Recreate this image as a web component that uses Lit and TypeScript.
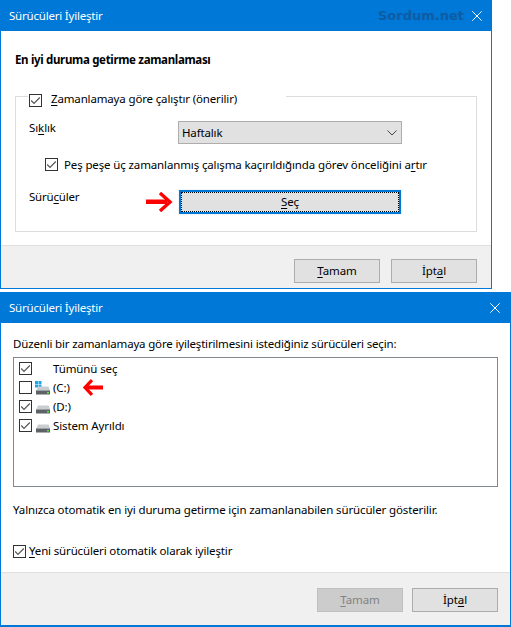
import { LitElement, html, css, svg } from "lit";
import { customElement } from "lit/decorators.js";

const check = svg`<svg class="cb" viewBox="0 0 13 13" width="13" height="13"><rect x=".5" y=".5" width="12" height="12" fill="#fff" stroke="#333"/><path d="M2.2 6.500 5 9.300 10.800 3.500" fill="none" stroke="#555" stroke-width="1.2"/></svg>`;
const uncheck = svg`<svg class="cb" viewBox="0 0 13 13" width="13" height="13"><rect x=".5" y=".5" width="12" height="12" fill="#fff" stroke="#333"/></svg>`;
const close = svg`<svg class="x" viewBox="0 0 10 10" width="10" height="10"><path d="M.3.3 9.700 9.700M9.700.3.3 9.700" stroke="#fff" stroke-width="1" fill="none"/></svg>`;
const arrowR = svg`<svg class="arrow" viewBox="0 0 27 20" width="27" height="20"><path d="M0 7.500h21v4.500H0z" fill="#f00"/><path d="M14 1 24 10 14 19" fill="none" stroke="#f00" stroke-width="3.400"/></svg>`;
const arrowL = svg`<svg class="arrow" viewBox="0 0 21 17" width="21" height="17"><path d="M4 6.500h17v4H4z" fill="#f00"/><path d="M10 1.200 3 8.500 10 15.800" fill="none" stroke="#f00" stroke-width="3.200"/></svg>`;
const drive = (win: boolean) => svg`<svg class="drive" viewBox="0 0 16 16" width="16" height="16">
  ${win ? svg`<path d="M1 0h3v3H1zM4.500 0h3v3h-3zM1 3.500h3v3H1zM4.500 3.500h3v3h-3z" fill="#1ea7e8"/>` : ""}
  <path d="M2.500 9 4 5.500h10.500L16 9z" fill="#c9cdd0"/>
  <rect x="2" y="9" width="14" height="4.500" fill="#5c6266"/>
  <rect x="2" y="9" width="14" height="1" fill="#9aa0a4"/>
  <rect x="13" y="11" width="2" height="1.500" fill="#5fe04a"/>
</svg>`;

@customElement("app-root")
export class AppRoot extends LitElement {
  static styles = css`
    :host { display: block; width: 511px; height: 627px; overflow: hidden; background: #fff;
      font: 11.5px/16px "Noto Sans", sans-serif; color: #000; letter-spacing: -.12px; }
    .page { display: flex; flex-direction: column; gap: 3px; align-items: flex-start; }
    .win { box-sizing: border-box; border: 1px solid #0078d7; border-top: 0; display: flex; flex-direction: column; background: #fff; }
    .w1 { width: 492px; height: 289px; }
    .w2 { width: 511px; height: 335px; border-width: 0 1px 2px 1px; }
    .title { height: 31px; flex: none; background: #0078d7; color: #fff; display: flex; align-items: center; padding: 0 10px 0 9px; margin: 0 -1px; letter-spacing: -.2px; }
    .w2 .title { padding-right: 11px; }
    .title .t { flex: 1; }
    .title .wm { font: bold 13px "DejaVu Sans", sans-serif; color: #0f5ca3; letter-spacing: 0; margin-right: 8px; }
    .x { display: block; }
    .body { flex: 1; min-height: 0; }
    .w1 .body { padding: 21px 15px 0 14px; }
    h2 { margin: 0; font: bold 11.5px/16px "Noto Sans", sans-serif; letter-spacing: -.33px; }
    fieldset { margin: 17px 0 0; padding: 14px 13px 0; height: 147px; box-sizing: border-box; border: 1px solid #dcdcdc; min-width: 0; width: 462px; }
    legend { margin-left: -1px; width: 258px; display: flex; align-items: flex-end; gap: 9px; height: 22px; padding: 0 0 0 1px; box-sizing: border-box; letter-spacing: -.15px; }
    .cb { display: block; flex: none; }
    .grid { display: grid; grid-template-columns: 149px 224px; }
    .lab { letter-spacing: -.1px; margin-top: -1px; }
    .select { box-sizing: border-box; height: 23px; background: #e1e1e1; border: 1px solid #adadad; display: flex; align-items: center; justify-content: space-between; padding: 0 4px 0 3px; letter-spacing: -.15px; }
    .opt { grid-column: 1 / 3; display: flex; align-items: center; gap: 6px; padding-left: 16px; margin: 14px 0 19px; letter-spacing: -.13px; white-space: nowrap; height: 13px; }
    .btn { box-sizing: border-box; width: 86px; height: 24px; background: #e1e1e1; border: 1px solid #adadad; display: flex; align-items: center; justify-content: center; }
    .focus { width: 222px; height: 24px; margin-left: 1px; border: 2px solid #0078d7; box-shadow: 0 0 0 1px #f4f4f4; position: relative; }
    .focus::after { content: ""; position: absolute; inset: 0; border: 1px dotted #000; }
    .lab2 { display: flex; justify-content: space-between; align-items: flex-start; padding-right: 5px; margin-top: -1px; letter-spacing: -.2px; }
    .arrow { display: block; flex: none; }
    .lab2 .arrow { margin-top: 3px; }
    .foot { flex: none; height: 43px; box-sizing: border-box; background: #f0f0f0; border-top: 1px solid #dfdfdf; display: flex; justify-content: flex-end; gap: 11px; padding: 13px 14px 0 0; }
    .w2 .foot { height: 53px; gap: 9px; padding: 15px 12px 0 0; }
    .dis { background: #ccc; border-color: #bfbfbf; color: #838383; }
    .w2 .body { padding: 13px 12px 0 12px; }
    .intro { letter-spacing: -.17px; }
    .list { box-sizing: border-box; height: 130px; margin-top: 5px; border: 1px solid #828790; padding: 1px 5px; }
    .item { display: flex; align-items: center; height: 19px; gap: 2px; }
    .item .txt { margin-left: 1px; }
    .item .drive { margin-top: 3px; }
    .item .ph { width: 16px; height: 16px; flex: none; }
    .item .arrow { margin-left: 10px; }
    .note { margin-top: 15px; letter-spacing: -.13px; }
    .newd { display: flex; align-items: center; gap: 3px; margin-top: 25px; letter-spacing: -.15px; }
    u { text-underline-offset: 2px; text-decoration-thickness: 1px; }
  `;

  render() {
    return html`<div class="page">
      <section class="win w1">
        <div class="title"><span class="t">Sürücüleri İyileştir</span><span class="wm">Sordum.net</span>${close}</div>
        <div class="body">
          <h2>En iyi duruma getirme zamanlaması</h2>
          <fieldset>
            <legend>${check}<span><u>Z</u>amanlamaya göre çalıştır (önerilir)</span></legend>
            <div class="grid">
              <div class="lab">Sı<u>k</u>lık</div>
              <div class="select"><span>Haftalık</span>
                <svg viewBox="0 0 10 6" width="10" height="6"><path d="M.5.5 5 5 9.500.5" fill="none" stroke="#444"/></svg></div>
              <div class="opt">${check}<span>Peş peşe üç zamanlanmış çalışma kaçırıldığında görev önceliğini a<u>r</u>tır</span></div>
              <div class="lab2"><span>Sürü<u>c</u>üler</span>${arrowR}</div>
              <div class="btn focus"><span><u>S</u>eç</span></div>
            </div>
          </fieldset>
        </div>
        <div class="foot"><div class="btn"><span><u>T</u>amam</span></div><div class="btn"><span>İpt<u>a</u>l</span></div></div>
      </section>
      <section class="win w2">
        <div class="title"><span class="t">Sürücüleri İyileştir</span>${close}</div>
        <div class="body">
          <div class="intro">Düzenli bir zamanlamaya göre iyileştirilmesini istediğiniz sürücüleri seçin:</div>
          <div class="list">
            <div class="item">${check}<span class="ph"></span><span class="txt">Tümünü seç</span></div>
            <div class="item">${uncheck}${drive(true)}<span class="txt">(C:)</span>${arrowL}</div>
            <div class="item">${check}${drive(false)}<span class="txt">(D:)</span></div>
            <div class="item">${check}${drive(false)}<span class="txt">Sistem Ayrıldı</span></div>
          </div>
          <div class="note">Yalnızca otomatik en iyi duruma getirme için zamanlanabilen sürücüler gösterilir.</div>
          <div class="newd">${check}<span><u>Y</u>eni sürücüleri otomatik olarak iyileştir</span></div>
        </div>
        <div class="foot"><div class="btn dis"><span><u>T</u>amam</span></div><div class="btn"><span>İpt<u>a</u>l</span></div></div>
      </section>
    </div>`;
  }
}
